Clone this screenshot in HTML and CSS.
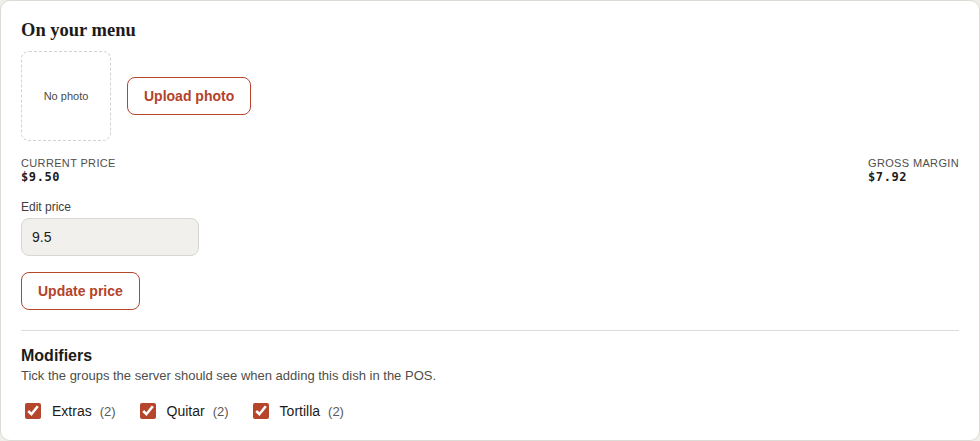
FILE: index.html
```html
<!DOCTYPE html>
<html lang="en">

<head>
  <meta charset="UTF-8">
  <meta name="viewport" content="width=device-width, initial-scale=1.0">
  <title>Dish settings</title>
  <link rel="stylesheet" href="styles.css">
</head>

<body>
  <div class="card">
    <h2 class="card_title">On your menu</h2>

    <div class="photo_row">
      <div class="photo_box">No photo</div>
      <button class="btn_outline">Upload photo</button>
    </div>

    <div class="price_row">
      <div class="stat">
        <div class="stat_label">CURRENT PRICE</div>
        <div class="stat_value">$9.50</div>
      </div>
      <div class="stat stat_right">
        <div class="stat_label">GROSS MARGIN</div>
        <div class="stat_value">$7.92</div>
      </div>
    </div>

    <label class="field_label" for="priceInput">Edit price</label>
    <input type="text" id="priceInput" class="price_input" value="9.5">

    <button class="btn_outline update_btn">Update price</button>

    <hr class="divider">

    <!-- モディファイア -->
    <h3 class="section_title">Modifiers</h3>
    <p class="section_hint">Tick the groups the server should see when adding this dish in the POS.</p>

    <div class="modifier_list">
      <label class="modifier"><input type="checkbox" checked> <span class="mod_name">Extras</span> <span class="mod_count">(2)</span></label>
      <label class="modifier"><input type="checkbox" checked> <span class="mod_name">Quitar</span> <span class="mod_count">(2)</span></label>
      <label class="modifier"><input type="checkbox" checked> <span class="mod_name">Tortilla</span> <span class="mod_count">(2)</span></label>
    </div>
  </div>
</body>

</html>
```

FILE: styles.css
```css
body {
  margin: 0;
  font-family: "Liberation Sans", Arial, sans-serif;
  background-color: #efeee9;
  color: #1c1b19;
}

.card {
  box-sizing: border-box;
  width: 980px;
  height: 441px;
  background-color: #fff;
  border: 1px solid #dddbd5;
  border-radius: 10px;
  padding: 17px 20px 20px 20px;
}

.card_title {
  margin: 0 0 9px 0;
  font-family: "Liberation Serif", "Times New Roman", serif;
  font-size: 18.5px;
  font-weight: bold;
  line-height: 24px;
}

.photo_row {
  display: flex;
  align-items: center;
  gap: 16px;
}

.photo_box {
  width: 90px;
  height: 90px;
  box-sizing: border-box;
  border: 1px dashed #d4d2cc;
  border-radius: 8px;
  display: flex;
  justify-content: center;
  align-items: center;
  font-size: 11px;
  color: #4a4a48;
}

.btn_outline {
  font-family: "Liberation Sans", Arial, sans-serif;
  background: #fff;
  border: 1px solid #b5462c;
  border-radius: 8px;
  color: #b3432a;
  font-size: 14px;
  font-weight: bold;
  height: 38px;
  padding: 0 16px;
  cursor: pointer;
}

.price_row {
  display: flex;
  justify-content: space-between;
  margin-top: 16px;
}

.stat_label {
  font-size: 11px;
  line-height: 13px;
  letter-spacing: 0.35px;
  color: #4f4e4a;
}

.stat_value {
  font-family: "DejaVu Sans Mono", "Liberation Mono", monospace;
  font-size: 12px;
  font-weight: bold;
  line-height: 14px;
  letter-spacing: 0.6px;
}

.field_label {
  display: block;
  margin-top: 16px;
  font-size: 12px;
  line-height: 14px;
  color: #3f3e3b;
}

.price_input {
  display: block;
  box-sizing: border-box;
  width: 178px;
  height: 38px;
  margin-top: 4px;
  padding: 0 10px;
  background-color: #f1f0ed;
  border: 1px solid #d8d6d0;
  border-radius: 8px;
  font-family: "Liberation Sans", Arial, sans-serif;
  font-size: 14px;
  color: #1c1b19;
}

.update_btn {
  display: block;
  margin-top: 16px;
}

.divider {
  border: none;
  border-top: 1px solid #dddbd5;
  margin: 20px 0 15px 0;
}

.section_title {
  margin: 0;
  font-size: 16px;
  line-height: 19px;
  font-weight: bold;
}

.section_hint {
  margin: 3px 0 0 0;
  font-size: 13px;
  line-height: 16px;
  color: #4f4e4a;
}

.modifier_list {
  display: flex;
  gap: 20px;
  margin-top: 19px;
}

.modifier {
  display: flex;
  align-items: center;
  font-size: 14px;
}

.modifier input {
  width: 16px;
  height: 16px;
  margin: 0 8px 0 4px;
  accent-color: #b5462c;
}

.mod_name {
  margin-left: 3px;
}

.mod_count {
  margin-left: 8px;
  font-size: 13px;
  color: #5a5955;
}
```
